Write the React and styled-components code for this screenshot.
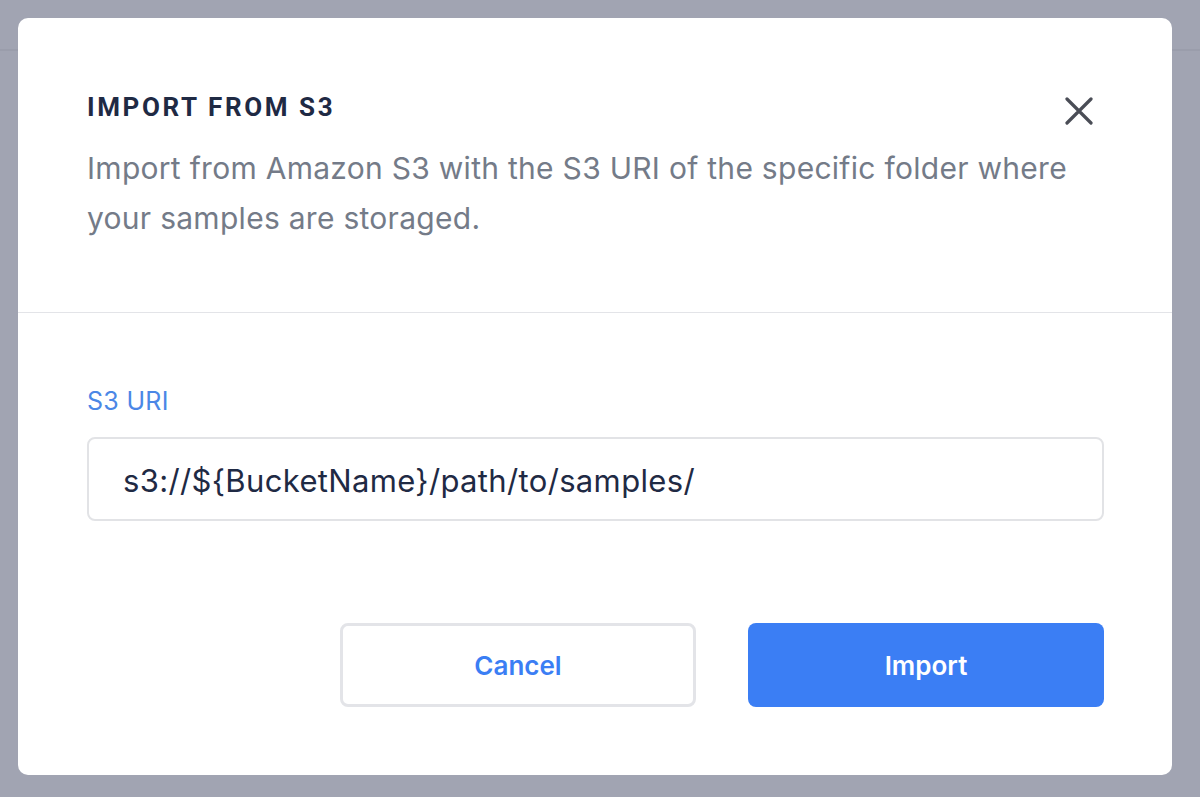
import styled, { createGlobalStyle } from 'styled-components';

const Global = createGlobalStyle`
  html, body {
    margin: 0;
    padding: 0;
    background: #a1a4b2;
  }
  * { box-sizing: border-box; }
`;

const Backdrop = styled.div`
  min-height: 100vh;
  padding: 18px 28px 22px 18px;
  background:
    linear-gradient(to bottom, transparent 49px, #9a9dab 49px, #9a9dab 51px, transparent 51px),
    #a1a4b2;
  font-family: Inter, "Noto Sans", sans-serif;
`;

const Modal = styled.div`
  width: 1154px;
  height: 757px;
  background: #ffffff;
  border-radius: 10px;
  display: flex;
  flex-direction: column;
  overflow: hidden;
`;

const Header = styled.div`
  padding: 72px 69px 69px 69px;
  border-bottom: 1.5px solid #e3e4e8;
`;

const TitleRow = styled.div`
  display: flex;
  align-items: flex-start;
  justify-content: space-between;
  height: 34px;
`;

const Title = styled.h2`
  margin: 0;
  font-family: Roboto, "Liberation Sans", sans-serif;
  font-size: 26px;
  line-height: 34px;
  font-weight: 700;
  letter-spacing: 2.6px;
  color: #1f2a44;
`;

const CloseButton = styled.button`
  border: none;
  background: none;
  padding: 0;
  margin: 7px 10px 0 0;
  width: 28px;
  height: 28px;
  cursor: pointer;
  color: #4a4d56;
  display: flex;
`;

const Description = styled.p`
  margin: 19px 0 0;
  font-size: 30px;
  line-height: 50px;
  color: #747b88;
  letter-spacing: 0.28px;
`;

const Body = styled.div`
  padding: 72px 68px 68px 69px;
  display: flex;
  flex-direction: column;
  flex: 1;
`;

const Label = styled.label`
  font-size: 25px;
  line-height: 32px;
  letter-spacing: 0.3px;
  color: #4b87e6;
`;

const Input = styled.input`
  margin-top: 20px;
  height: 84px;
  width: 100%;
  border: 2px solid #e2e3e6;
  border-radius: 8px;
  padding: 2px 34px 0;
  font-family: Inter, "Noto Sans", sans-serif;
  font-size: 31px;
  letter-spacing: 0.35px;
  color: #1f2a44;
  outline: none;
`;

const Actions = styled.div`
  margin-top: auto;
  display: flex;
  justify-content: flex-end;
  gap: 52px;
`;

const Button = styled.button`
  width: 356px;
  height: 84px;
  border-radius: 8px;
  font-family: Inter, "Noto Sans", sans-serif;
  font-size: 26px;
  font-weight: 600;
  cursor: pointer;
  border: ${(p) => (p.$primary ? 'none' : '3px solid #e3e4e8')};
  background: ${(p) => (p.$primary ? '#3b7ef4' : '#ffffff')};
  color: ${(p) => (p.$primary ? '#ffffff' : '#3b7ef4')};
`;

function CloseIcon() {
  return (
    <svg width="28" height="28" viewBox="0 0 28 28" fill="none">
      <path d="M2 2L26 26M26 2L2 26" stroke="currentColor" strokeWidth="3.2" strokeLinecap="round" />
    </svg>
  );
}

export default function App() {
  return (
    <>
      <Global />
      <Backdrop>
        <Modal>
          <Header>
            <TitleRow>
              <Title>IMPORT FROM S3</Title>
              <CloseButton aria-label="Close">
                <CloseIcon />
              </CloseButton>
            </TitleRow>
            <Description>
              Import from Amazon S3 with the S3 URI of the specific folder where your samples are storaged.
            </Description>
          </Header>
          <Body>
            <Label htmlFor="s3uri">S3 URI</Label>
            <Input id="s3uri" defaultValue="s3://${BucketName}/path/to/samples/" />
            <Actions>
              <Button>Cancel</Button>
              <Button $primary>Import</Button>
            </Actions>
          </Body>
        </Modal>
      </Backdrop>
    </>
  );
}
